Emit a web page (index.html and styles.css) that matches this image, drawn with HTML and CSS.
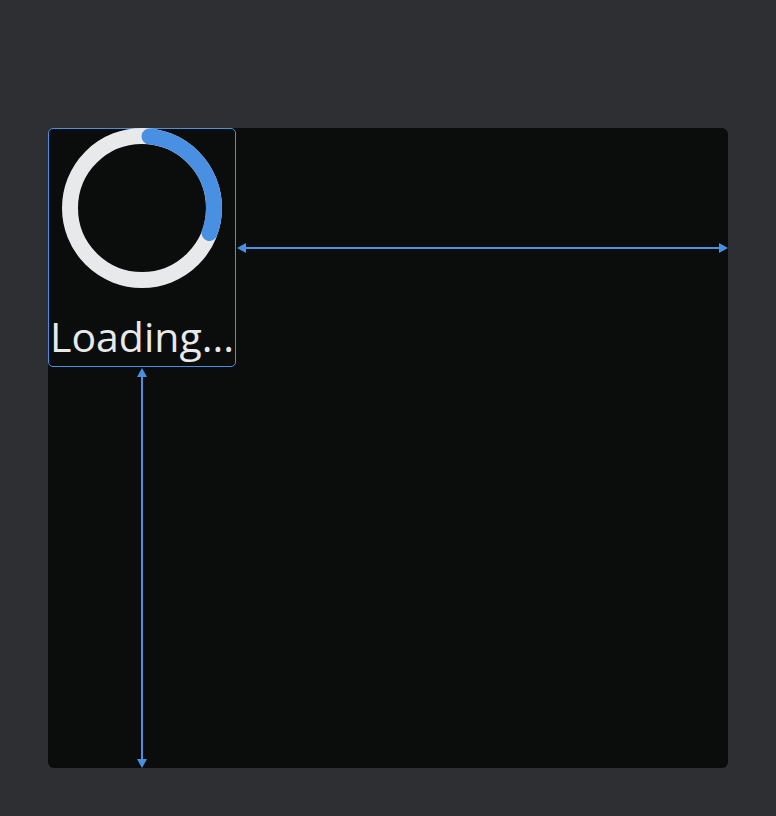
FILE: index.html
```html
<!DOCTYPE html>
<html>
<head>
<meta charset="utf-8">
<link rel="stylesheet" href="styles.css">
</head>
<body>
<div class="panel">
  <div class="loader">
    <svg class="spinner" width="160" height="160" viewBox="0 0 160 160">
      <circle class="track" cx="80" cy="80" r="72"/>
      <circle class="arc" cx="80" cy="80" r="72"/>
    </svg>
    <div class="label">Loading...</div>
  </div>
  <div class="harrow">
    <span class="head head-left"></span>
    <span class="hline"></span>
    <span class="head head-right"></span>
  </div>
  <div class="varrow">
    <span class="head head-up"></span>
    <span class="vline"></span>
    <span class="head head-down"></span>
  </div>
</div>
</body>
</html>
```
FILE: styles.css
```css
html, body {
  margin: 0;
  padding: 0;
  background: #2d2f33;
}
body {
  padding: 128px 48px 48px 48px;
  font-family: "Open Sans", "Noto Sans", sans-serif;
}
.panel {
  width: 680px;
  height: 640px;
  background: #0b0d0d;
  border-radius: 6px;
  display: grid;
  grid-template-columns: 188px 1fr;
  grid-template-rows: 239px 1fr;
}
.loader {
  box-sizing: border-box;
  border: 1.5px solid #4a90e2;
  border-radius: 5px;
  display: flex;
  flex-direction: column;
  align-items: center;
}
.spinner {
  display: block;
  margin-top: -1px;
}
.spinner circle {
  fill: none;
  stroke-width: 16;
}
.track {
  stroke: #e8e9ea;
}
.arc {
  stroke: #4a90e2;
  stroke-linecap: round;
  stroke-dasharray: 131 400;
  transform: rotate(-84deg);
  transform-origin: 80px 80px;
}
.label {
  margin-top: 20px;
  font-size: 41px;
  line-height: 56px;
  color: #e8e9ea;
  white-space: nowrap;
}
.harrow {
  display: flex;
  align-items: center;
  padding-left: 1px;
}
.hline {
  flex: 1;
  height: 2px;
  background: #4a90e2;
}
.varrow {
  display: flex;
  flex-direction: column;
  align-items: center;
  padding-top: 1px;
}
.vline {
  flex: 1;
  width: 2px;
  background: #4a90e2;
}
.head {
  width: 0;
  height: 0;
  border-style: solid;
  border-color: transparent;
}
.head-left {
  border-width: 5px 9px 5px 0;
  border-right-color: #4a90e2;
}
.head-right {
  border-width: 5px 0 5px 9px;
  border-left-color: #4a90e2;
}
.head-up {
  border-width: 0 5px 9px 5px;
  border-bottom-color: #4a90e2;
}
.head-down {
  border-width: 9px 5px 0 5px;
  border-top-color: #4a90e2;
}
```
